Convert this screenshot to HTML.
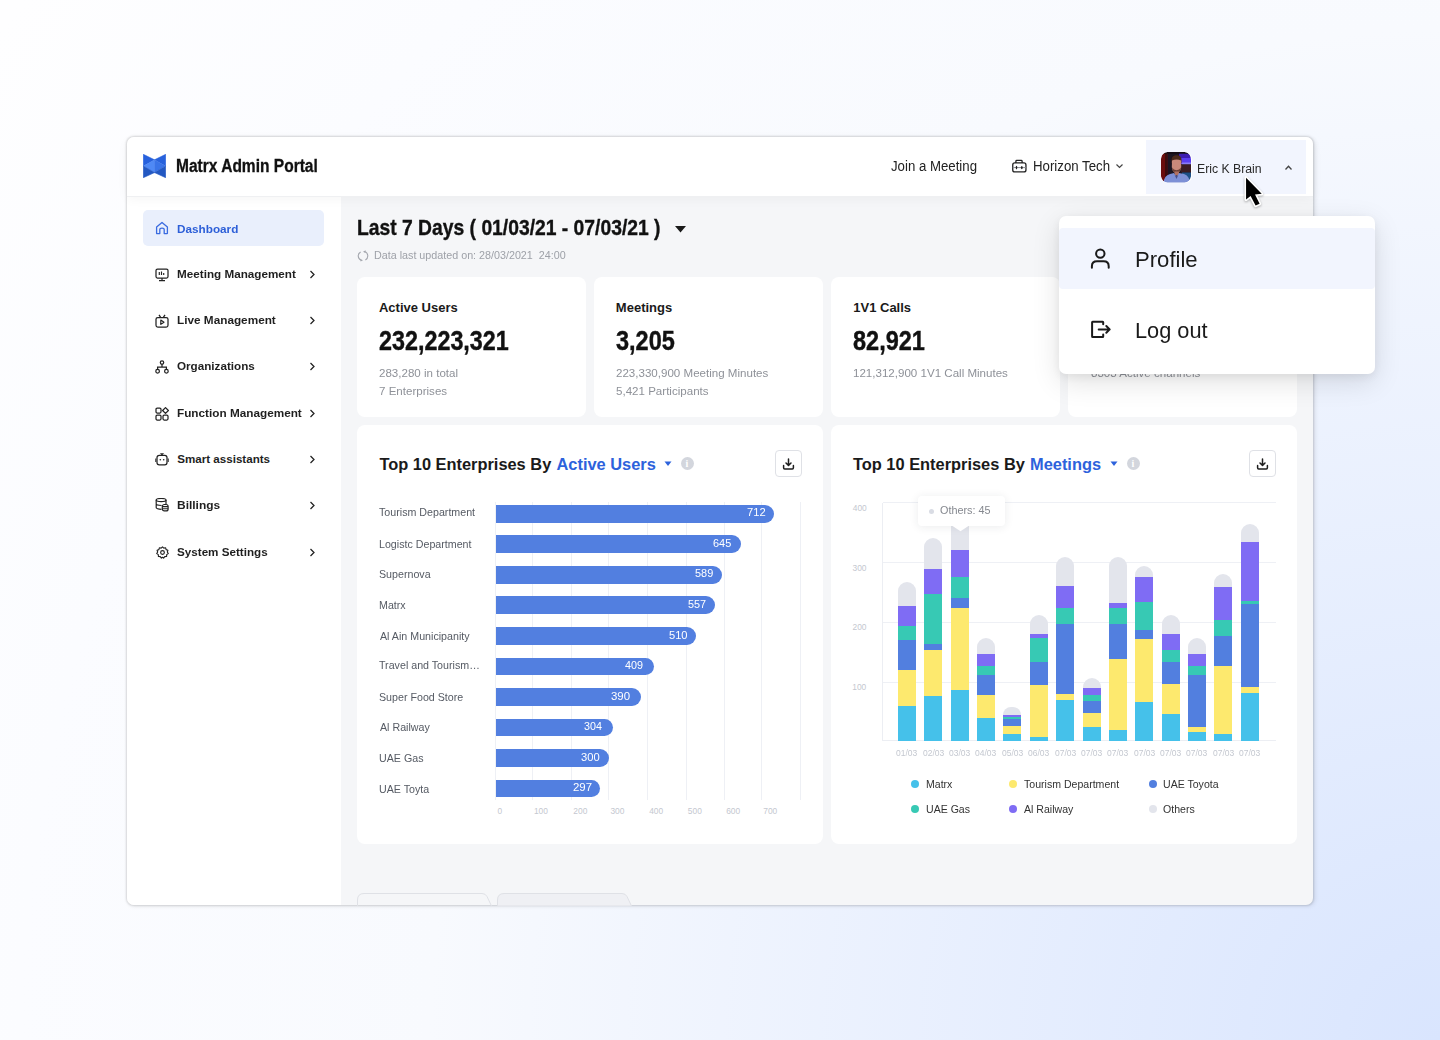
<!DOCTYPE html>
<html><head><meta charset="utf-8"><title>Matrx Admin Portal</title>
<style>
html,body{margin:0;padding:0}
body{width:1440px;height:1040px;position:relative;overflow:hidden;background:radial-gradient(circle at 100% 100%,#d9e5fe 0px,#f8fafe 1010px,#fbfcff 1420px,#fefeff 1760px);font-family:"Liberation Sans",sans-serif}
.t{position:absolute;white-space:nowrap;line-height:1;transform-origin:0 0}
</style></head><body>
<div style="position:absolute;left:127.00px;top:137.00px;width:1186.00px;height:768.00px;background:#f5f6f8;border-radius:7px;box-shadow:0 0 2px 0.6px rgba(0,0,0,0.12),1.5px 1px 5px rgba(0,0,0,0.09);overflow:hidden"></div>
<div style="position:absolute;left:127.00px;top:196.00px;width:214.00px;height:709.00px;background:#fff;border-bottom-left-radius:7px"></div>
<div style="position:absolute;left:127.00px;top:137.00px;width:1186.00px;height:59.00px;background:#fff;border-top-left-radius:7px;border-top-right-radius:7px;box-shadow:0 3px 12px rgba(0,0,0,0.045)"></div>
<div style="position:absolute;left:127.00px;top:196.00px;width:1186.00px;height:1.00px;background:#eff0f2"></div>
<svg style="position:absolute;left:143.00px;top:154.00px;" width="23" height="24" viewBox="0 0 23 24" fill="none">
<path d="M0.3 0.3 L11.5 5.8 L0.3 12 Z" fill="#2761dd" stroke="#2761dd" stroke-width="0.6" stroke-linejoin="round"/>
<path d="M22.7 0.3 L11.5 5.8 L22.7 12 Z" fill="#2862dc" stroke="#2862dc" stroke-width="0.6" stroke-linejoin="round"/>
<path d="M0.3 12 L11.9 5.6 L11.9 18.8 Z" fill="#4f89f5"/>
<path d="M22.7 12 L11.5 5.8 L11.5 18.6 Z" fill="#3a74e8"/>
<path d="M0.3 12 L11.5 18.6 L0.3 23.7 Z" fill="#2358c2" stroke="#2358c2" stroke-width="0.6" stroke-linejoin="round"/>
<path d="M22.7 12 L11.5 18.6 L22.7 23.7 Z" fill="#2358c2" stroke="#2358c2" stroke-width="0.6" stroke-linejoin="round"/>
</svg>
<div class="t" style="left:176.01px;top:158px;font-size:17.50px;font-weight:700;color:#111;transform:scaleX(0.8875);-webkit-text-stroke:0.3px #111;">Matrx Admin Portal</div>
<div class="t" style="left:891.46px;top:159px;font-size:14.00px;color:#222;transform:scaleX(0.9444);">Join a Meeting</div>
<svg style="position:absolute;left:1011.00px;top:159.00px;" width="16" height="14" viewBox="0 0 16 14" fill="none"><rect x="1.75" y="3.9" width="13.2" height="9" rx="2" stroke="#222" stroke-width="1.3"/><path d="M4.9 3.9 V2.2 Q4.9 1.4 5.8 1.4 H10.2 Q11.1 1.4 11.1 2.2 V3.9" stroke="#222" stroke-width="1.3"/><path d="M1.8 8.6 H14.9" stroke="#8a8d93" stroke-width="1"/><ellipse cx="5.5" cy="8.6" rx="0.75" ry="1.8" fill="#222"/><ellipse cx="10.8" cy="8.6" rx="0.9" ry="1.7" fill="#222"/></svg>
<div class="t" style="left:1033.05px;top:159px;font-size:14.00px;color:#222;transform:scaleX(0.9467);">Horizon Tech</div>
<svg style="position:absolute;left:1115.00px;top:163.00px;" width="9" height="6" viewBox="0 0 9 6" fill="none"><path d="M1.5 1.5 L4.5 4.5 L7.5 1.5" stroke="#444" stroke-width="1.2"/></svg>
<div style="position:absolute;left:1146.00px;top:140.00px;width:160.00px;height:54.00px;background:#f2f5fe"></div>
<div style="position:absolute;left:1160.5px;top:151.5px;width:31px;height:31.5px;border-radius:7px;background:#fff"></div>
<svg style="position:absolute;left:1161px;top:152px;border-radius:6.5px" width="30" height="30.5" viewBox="0 0 30 30.5">
<defs><filter id="av" x="-10%" y="-10%" width="120%" height="120%"><feGaussianBlur stdDeviation="0.55"/></filter>
<clipPath id="avc"><rect x="0" y="0" width="30" height="30.5" rx="6.5"/></clipPath></defs>
<g clip-path="url(#avc)"><g filter="url(#av)">
<rect x="-2" y="-2" width="34" height="35" fill="#1a1420"/>
<rect x="-2" y="-2" width="8.5" height="35" fill="#6a070c"/>
<rect x="4" y="-2" width="2.5" height="35" fill="#3a0a10"/>
<rect x="18" y="1.5" width="14" height="10.5" fill="#3b1fb0"/>
<rect x="20" y="6" width="12" height="6" fill="#5a3cf0"/>
<rect x="21" y="10.5" width="11" height="2" fill="#8a7cf5"/>
<rect x="20" y="12.5" width="12" height="8" fill="#3a1e22"/>
<rect x="21" y="20.5" width="11" height="8" fill="#1d4f86"/>
<rect x="-2" y="-2" width="34" height="3.5" fill="#120c12"/>
<path d="M10.5 8 Q10.5 3.5 15.5 3.3 Q20.5 3.5 20.5 8 L20.5 11 L10.5 11 Z" fill="#4d2a1e"/>
<path d="M11 8.5 Q15.5 6.5 20.2 8.5 L20.2 15 Q20 20.5 15.5 21 Q11 20.5 10.8 15 Z" fill="#c9897a"/>
<path d="M11 15.5 Q11.5 20.8 15.5 21.3 Q19.5 20.8 20 15.5 Q18.5 18 15.5 18.2 Q12.5 18 11 15.5 Z" fill="#6a3f34"/>
<rect x="13.5" y="19.5" width="4.5" height="4" fill="#b07060"/>
<path d="M2.5 31 Q3 23.5 9 22 L13 21 L15.5 25 L18 21 L23 22 Q28.5 24 29 31 Z" fill="#7d90d6"/>
<path d="M13 21.5 L15.5 27 L18 21.5 L16.8 24.5 L15.5 23 L14.2 24.5 Z" fill="#4a4f8a"/>
</g></g></svg>
<div class="t" style="left:1196.88px;top:163px;font-size:12.00px;color:#2a2a2a;transform:scaleX(1.0202);">Eric K Brain</div>
<svg style="position:absolute;left:1284.00px;top:164.00px;" width="9" height="7" viewBox="0 0 9 7" fill="none"><path d="M1.5 5.5 L4.5 2.2 L7.5 5.5" stroke="#444" stroke-width="1.3"/></svg>
<div style="position:absolute;left:143.00px;top:210.00px;width:181.00px;height:36.00px;background:#e9effc;border-radius:5px"></div>
<svg style="position:absolute;left:155.00px;top:221.00px;" width="14" height="14" viewBox="0 0 14 14" fill="none"><path d="M1.6 6 L7 1.4 L12.4 6 V12.2 Q12.4 12.6 12 12.6 H9.2 V8.6 Q9.2 7.2 7 7.2 Q4.8 7.2 4.8 8.6 V12.6 H2 Q1.6 12.6 1.6 12.2 Z" stroke="#3a6be0" stroke-width="1.3" stroke-linejoin="round"/></svg>
<div class="t" style="left:176.74px;top:223px;font-size:11.60px;font-weight:700;color:#2d5fd8;transform:scaleX(1.0127);">Dashboard</div>
<svg style="position:absolute;left:155.00px;top:267.90px;" width="14" height="14" viewBox="0 0 14 14" fill="none"><rect x="1" y="1" width="12" height="9" rx="1.5" stroke="#222" stroke-width="1.25"/><path d="M7 10 V12.4 M4 12.6 H10" stroke="#222" stroke-width="1.25"/><path d="M4.3 4 V7 M6.5 3.5 V7 M8.7 5 V7" stroke="#222" stroke-width="1.15"/></svg>
<div class="t" style="left:176.74px;top:268px;font-size:11.60px;font-weight:700;color:#1f1f1f;transform:scaleX(1.0085);">Meeting Management</div>
<svg style="position:absolute;left:309.00px;top:270.00px;" width="7" height="9" viewBox="0 0 7 9" fill="none"><path d="M1.5 1 L5 4.5 L1.5 8" stroke="#222" stroke-width="1.25"/></svg>
<svg style="position:absolute;left:155.00px;top:314.17px;" width="14" height="14" viewBox="0 0 14 14" fill="none"><rect x="1" y="3.5" width="12" height="9.5" rx="1.8" stroke="#222" stroke-width="1.25"/><path d="M4 0.8 L5.5 3.2 M10 0.8 L8.5 3.2" stroke="#222" stroke-width="1.25"/><path d="M5.8 6 L9 8.2 L5.8 10.4 Z" stroke="#222" stroke-width="1.15" stroke-linejoin="round"/></svg>
<div class="t" style="left:176.74px;top:314px;font-size:11.60px;font-weight:700;color:#1f1f1f;transform:scaleX(1.0155);">Live Management</div>
<svg style="position:absolute;left:309.00px;top:316.00px;" width="7" height="9" viewBox="0 0 7 9" fill="none"><path d="M1.5 1 L5 4.5 L1.5 8" stroke="#222" stroke-width="1.25"/></svg>
<svg style="position:absolute;left:155.00px;top:360.44px;" width="14" height="14" viewBox="0 0 14 14" fill="none"><circle cx="7" cy="2.6" r="1.7" stroke="#222" stroke-width="1.25"/><circle cx="2.6" cy="11.2" r="1.8" stroke="#222" stroke-width="1.25"/><circle cx="11.4" cy="11.2" r="1.8" stroke="#222" stroke-width="1.25"/><path d="M7 4.3 V7 M2.6 9.4 V7 H11.4 V9.4" stroke="#222" stroke-width="1.25"/></svg>
<div class="t" style="left:177.00px;top:360px;font-size:11.60px;font-weight:700;color:#1f1f1f;transform:scaleX(1.0065);">Organizations</div>
<svg style="position:absolute;left:309.00px;top:362.00px;" width="7" height="9" viewBox="0 0 7 9" fill="none"><path d="M1.5 1 L5 4.5 L1.5 8" stroke="#222" stroke-width="1.25"/></svg>
<svg style="position:absolute;left:155.00px;top:406.71px;" width="14" height="14" viewBox="0 0 14 14" fill="none"><rect x="1" y="1" width="5" height="5" rx="1.2" stroke="#222" stroke-width="1.25"/><rect x="1" y="8" width="5" height="5" rx="1.2" stroke="#222" stroke-width="1.25"/><rect x="8" y="8" width="5" height="5" rx="1.2" stroke="#222" stroke-width="1.25"/><path d="M10.5 0.6 L13.4 3.5 L10.5 6.4 L7.6 3.5 Z" stroke="#222" stroke-width="1.25" stroke-linejoin="round"/></svg>
<div class="t" style="left:176.74px;top:407px;font-size:11.60px;font-weight:700;color:#1f1f1f;transform:scaleX(1.0143);">Function Management</div>
<svg style="position:absolute;left:309.00px;top:409.00px;" width="7" height="9" viewBox="0 0 7 9" fill="none"><path d="M1.5 1 L5 4.5 L1.5 8" stroke="#222" stroke-width="1.25"/></svg>
<svg style="position:absolute;left:155.00px;top:452.98px;" width="14" height="14" viewBox="0 0 14 14" fill="none"><rect x="2" y="2.3" width="10" height="9.6" rx="2.3" stroke="#222" stroke-width="1.25"/><path d="M4.9 0.2 H9.1 L7 2.6 Z" fill="#222"/><path d="M0.8 5.4 V8.9 M13.2 5.4 V8.9" stroke="#444" stroke-width="1.3"/><circle cx="5.3" cy="6.7" r="0.8" fill="#222"/><circle cx="8.7" cy="6.7" r="0.8" fill="#222"/></svg>
<div class="t" style="left:177.25px;top:453px;font-size:11.60px;font-weight:700;color:#1f1f1f;">Smart assistants</div>
<svg style="position:absolute;left:309.00px;top:455.00px;" width="7" height="9" viewBox="0 0 7 9" fill="none"><path d="M1.5 1 L5 4.5 L1.5 8" stroke="#222" stroke-width="1.25"/></svg>
<svg style="position:absolute;left:155.00px;top:498.25px;" width="14" height="14" viewBox="0 0 14 14" fill="none"><ellipse cx="6.1" cy="2.1" rx="4.9" ry="1.6" stroke="#222" stroke-width="1.2"/><path d="M1.2 2.1 V9.6 Q1.2 11.1 6.5 11.3 M11 2.1 V6 M1.2 5.8 Q1.2 7.4 6.6 7.5" stroke="#222" stroke-width="1.2"/><rect x="7.3" y="6.5" width="5.8" height="6.4" rx="2" fill="#fff" stroke="#222" stroke-width="1.2"/><path d="M7.3 8.6 H13.1 M7.3 10.8 H13.1" stroke="#222" stroke-width="1.1"/></svg>
<div class="t" style="left:176.73px;top:499px;font-size:11.60px;font-weight:700;color:#1f1f1f;transform:scaleX(1.0307);">Billings</div>
<svg style="position:absolute;left:309.00px;top:501.00px;" width="7" height="9" viewBox="0 0 7 9" fill="none"><path d="M1.5 1 L5 4.5 L1.5 8" stroke="#222" stroke-width="1.25"/></svg>
<svg style="position:absolute;left:155.50px;top:545.92px;" width="13" height="13" viewBox="0 0 14 14" fill="none"><path d="M7 0.9 L8.4 2.3 L10.4 1.9 L10.9 3.9 L12.8 4.6 L12.2 6.5 L13.2 8.2 L11.5 9.3 L11.4 11.3 L9.4 11.4 L8.2 13.1 L7 12.1 L5.8 13.1 L4.6 11.4 L2.6 11.3 L2.5 9.3 L0.8 8.2 L1.8 6.5 L1.2 4.6 L3.1 3.9 L3.6 1.9 L5.6 2.3 Z" stroke="#222" stroke-width="1.2" stroke-linejoin="round"/><circle cx="7" cy="7" r="2" stroke="#222" stroke-width="1.25"/></svg>
<div class="t" style="left:177.25px;top:546px;font-size:11.60px;font-weight:700;color:#1f1f1f;transform:scaleX(1.0056);">System Settings</div>
<svg style="position:absolute;left:309.00px;top:548.00px;" width="7" height="9" viewBox="0 0 7 9" fill="none"><path d="M1.5 1 L5 4.5 L1.5 8" stroke="#222" stroke-width="1.25"/></svg>
<div class="t" style="left:357.38px;top:218px;font-size:21.50px;font-weight:700;color:#111;transform:scaleX(0.8973);-webkit-text-stroke:0.35px #111;">Last 7 Days ( 01/03/21 - 07/03/21 )</div>
<svg style="position:absolute;left:674.00px;top:225.00px;" width="13" height="8" viewBox="0 0 13 8" fill="none"><path d="M1 1 H12 L6.5 7.4 Z" fill="#1a1a1a"/></svg>
<svg style="position:absolute;left:357.00px;top:249.50px;" width="12" height="12" viewBox="0 0 12 12" fill="none"><path d="M3.6 1.9 A4.67 4.67 0 0 0 4.2 10.3" stroke="#a3a6ad" stroke-width="1.1"/><path d="M8.4 10 A4.67 4.67 0 0 0 7.6 1.5" stroke="#a3a6ad" stroke-width="1.1"/><path d="M3.4 8.9 L6 10.2 L3.6 11.6 Z" fill="#a3a6ad"/><path d="M8.6 0.3 L6 1.7 L8.4 3.1 Z" fill="#a3a6ad"/></svg>
<div class="t" style="left:374.27px;top:250px;font-size:11.00px;color:#9ea1a8;transform:scaleX(0.9762);white-space:pre;">Data last updated on: 28/03/2021  24:00</div>
<div style="position:absolute;left:357.00px;top:277.00px;width:229.00px;height:140.00px;background:#fff;border-radius:8px"></div>
<div class="t" style="left:378.95px;top:301px;font-size:13.00px;font-weight:700;color:#1a1a1a;">Active Users</div>
<div class="t" style="left:378.55px;top:328px;font-size:27.00px;font-weight:700;color:#111;transform:scaleX(0.8645);-webkit-text-stroke:0.4px #111;">232,223,321</div>
<div class="t" style="left:378.69px;top:368px;font-size:11.40px;color:#8e9198;transform:scaleX(1.0150);">283,280 in total</div>
<div class="t" style="left:378.69px;top:386px;font-size:11.40px;color:#8e9198;transform:scaleX(1.0150);">7 Enterprises</div>
<div style="position:absolute;left:594.00px;top:277.00px;width:229.00px;height:140.00px;background:#fff;border-radius:8px"></div>
<div class="t" style="left:615.85px;top:301px;font-size:13.00px;font-weight:700;color:#1a1a1a;">Meetings</div>
<div class="t" style="left:616.16px;top:328px;font-size:27.00px;font-weight:700;color:#111;transform:scaleX(0.8701);-webkit-text-stroke:0.4px #111;">3,205</div>
<div class="t" style="left:616.09px;top:368px;font-size:11.40px;color:#8e9198;transform:scaleX(1.0150);">223,330,900 Meeting Minutes</div>
<div class="t" style="left:616.09px;top:386px;font-size:11.40px;color:#8e9198;transform:scaleX(1.0150);">5,421 Participants</div>
<div style="position:absolute;left:831.00px;top:277.00px;width:229.00px;height:140.00px;background:#fff;border-radius:8px"></div>
<div class="t" style="left:853.25px;top:301px;font-size:13.00px;font-weight:700;color:#1a1a1a;">1V1 Calls</div>
<div class="t" style="left:853.35px;top:328px;font-size:27.00px;font-weight:700;color:#111;transform:scaleX(0.8707);-webkit-text-stroke:0.4px #111;">82,921</div>
<div class="t" style="left:853.24px;top:368px;font-size:11.40px;color:#8e9198;transform:scaleX(1.0150);">121,312,900 1V1 Call Minutes</div>
<div style="position:absolute;left:1068.00px;top:277.00px;width:229.00px;height:140.00px;background:#fff;border-radius:8px"></div>
<div class="t" style="left:1090.65px;top:301px;font-size:13.00px;font-weight:700;color:#1a1a1a;">Live Channels</div>
<div class="t" style="left:1089.84px;top:328px;font-size:27.00px;font-weight:700;color:#111;transform:scaleX(0.8901);-webkit-text-stroke:0.4px #111;">1,203</div>
<div class="t" style="left:1090.89px;top:368px;font-size:11.40px;color:#8e9198;transform:scaleX(1.0150);">8303 Active channels</div>
<div style="position:absolute;left:357.00px;top:425.00px;width:466.00px;height:419.00px;background:#fff;border-radius:8px"></div>
<div style="position:absolute;left:775.00px;top:450.00px;width:27.00px;height:27.00px;background:#fff;border:1px solid #dfe1e6;border-radius:4px;box-sizing:border-box"></div>
<svg style="position:absolute;left:782.00px;top:457.00px;" width="13" height="13" viewBox="0 0 13 13" fill="none"><path d="M6.5 2 V8.3 M4 6 L6.5 8.4 L9 6" stroke="#1e1e1e" stroke-width="1.5" stroke-linecap="round" stroke-linejoin="round"/><path d="M1.6 8.4 V10.8 Q1.6 11.9 2.7 11.9 H10.3 Q11.4 11.9 11.4 10.8 V8.4" stroke="#1e1e1e" stroke-width="1.5" stroke-linecap="round"/></svg>
<div style="position:absolute;left:831.00px;top:425.00px;width:466.00px;height:419.00px;background:#fff;border-radius:8px"></div>
<div style="position:absolute;left:1249.00px;top:450.00px;width:27.00px;height:27.00px;background:#fff;border:1px solid #dfe1e6;border-radius:4px;box-sizing:border-box"></div>
<svg style="position:absolute;left:1256.00px;top:457.00px;" width="13" height="13" viewBox="0 0 13 13" fill="none"><path d="M6.5 2 V8.3 M4 6 L6.5 8.4 L9 6" stroke="#1e1e1e" stroke-width="1.5" stroke-linecap="round" stroke-linejoin="round"/><path d="M1.6 8.4 V10.8 Q1.6 11.9 2.7 11.9 H10.3 Q11.4 11.9 11.4 10.8 V8.4" stroke="#1e1e1e" stroke-width="1.5" stroke-linecap="round"/></svg>
<div class="t" style="left:379.40px;top:456px;font-size:16.40px;font-weight:700;color:#1a1a1a;">Top 10 Enterprises By</div>
<div class="t" style="left:556.50px;top:456px;font-size:16.40px;font-weight:700;color:#2d62dc;">Active Users</div>
<svg style="position:absolute;left:664.00px;top:461.00px;" width="8" height="6" viewBox="0 0 8 6" fill="none"><path d="M0.5 0.5 H7.5 L4 5 Z" fill="#2d62dc"/></svg>
<div style="position:absolute;left:680.5px;top:457px;width:13px;height:13px;border-radius:50%;background:#d3d6dd"></div>
<div style="position:absolute;left:680.5px;top:457px;width:13px;height:13px;font:bold 10px/13px 'Liberation Serif',serif;color:#fff;text-align:center">i</div>
<div class="t" style="left:853.00px;top:456px;font-size:16.40px;font-weight:700;color:#1a1a1a;">Top 10 Enterprises By</div>
<div class="t" style="left:1030.00px;top:456px;font-size:16.40px;font-weight:700;color:#2d62dc;">Meetings</div>
<svg style="position:absolute;left:1110.00px;top:461.00px;" width="8" height="6" viewBox="0 0 8 6" fill="none"><path d="M0.5 0.5 H7.5 L4 5 Z" fill="#2d62dc"/></svg>
<div style="position:absolute;left:1126.5px;top:457px;width:13px;height:13px;border-radius:50%;background:#d3d6dd"></div>
<div style="position:absolute;left:1126.5px;top:457px;width:13px;height:13px;font:bold 10px/13px 'Liberation Serif',serif;color:#fff;text-align:center">i</div>
<div style="position:absolute;left:495.30px;top:502.00px;width:1.00px;height:297.50px;background:#eef0f5"></div>
<div style="position:absolute;left:531.90px;top:502.00px;width:1.00px;height:297.50px;background:#eef0f5"></div>
<div style="position:absolute;left:571.10px;top:502.00px;width:1.00px;height:297.50px;background:#eef0f5"></div>
<div style="position:absolute;left:608.20px;top:502.00px;width:1.00px;height:297.50px;background:#eef0f5"></div>
<div style="position:absolute;left:646.70px;top:502.00px;width:1.00px;height:297.50px;background:#eef0f5"></div>
<div style="position:absolute;left:685.60px;top:502.00px;width:1.00px;height:297.50px;background:#eef0f5"></div>
<div style="position:absolute;left:723.90px;top:502.00px;width:1.00px;height:297.50px;background:#eef0f5"></div>
<div style="position:absolute;left:761.00px;top:502.00px;width:1.00px;height:297.50px;background:#eef0f5"></div>
<div style="position:absolute;left:800.20px;top:502.00px;width:1.00px;height:297.50px;background:#eef0f5"></div>
<div style="position:absolute;left:495.60px;top:504.80px;width:278.10px;height:17.80px;background:#527fe0;border-radius:0 9px 9px 0"></div>
<div class="t" style="left:379.26px;top:507px;font-size:11.00px;color:#555a63;transform:scaleX(0.9700);">Tourism Department</div>
<div class="t" style="left:747.19px;top:507px;font-size:11.00px;color:#fff;transform:scaleX(1.0171);">712</div>
<div style="position:absolute;left:495.60px;top:535.34px;width:245.10px;height:17.80px;background:#527fe0;border-radius:0 9px 9px 0"></div>
<div class="t" style="left:378.77px;top:539px;font-size:11.00px;color:#555a63;transform:scaleX(0.9700);">Logistc Department</div>
<div class="t" style="left:713.30px;top:538px;font-size:11.00px;color:#fff;transform:scaleX(0.9943);">645</div>
<div style="position:absolute;left:495.60px;top:565.88px;width:226.40px;height:17.80px;background:#527fe0;border-radius:0 9px 9px 0"></div>
<div class="t" style="left:379.01px;top:569px;font-size:11.00px;color:#555a63;transform:scaleX(0.9700);">Supernova</div>
<div class="t" style="left:695.10px;top:568px;font-size:11.00px;color:#fff;transform:scaleX(0.9943);">589</div>
<div style="position:absolute;left:495.60px;top:596.42px;width:219.00px;height:17.80px;background:#527fe0;border-radius:0 9px 9px 0"></div>
<div class="t" style="left:378.77px;top:600px;font-size:11.00px;color:#555a63;transform:scaleX(0.9700);">Matrx</div>
<div class="t" style="left:687.71px;top:599px;font-size:11.00px;color:#fff;transform:scaleX(0.9886);">557</div>
<div style="position:absolute;left:495.60px;top:626.96px;width:200.80px;height:17.80px;background:#527fe0;border-radius:0 9px 9px 0"></div>
<div class="t" style="left:379.50px;top:631px;font-size:11.00px;color:#555a63;transform:scaleX(0.9700);">Al Ain Municipanity</div>
<div class="t" style="left:669.09px;top:630px;font-size:11.00px;color:#fff;transform:scaleX(1.0114);">510</div>
<div style="position:absolute;left:495.60px;top:657.50px;width:158.40px;height:17.80px;background:#527fe0;border-radius:0 9px 9px 0"></div>
<div class="t" style="left:379.26px;top:660px;font-size:11.00px;color:#555a63;transform:scaleX(0.9700);">Travel and Tourism…</div>
<div class="t" style="left:624.65px;top:660px;font-size:11.00px;color:#fff;transform:scaleX(0.9803);">409</div>
<div style="position:absolute;left:495.60px;top:688.04px;width:145.40px;height:17.80px;background:#527fe0;border-radius:0 9px 9px 0"></div>
<div class="t" style="left:379.01px;top:692px;font-size:11.00px;color:#555a63;transform:scaleX(0.9700);">Super Food Store</div>
<div class="t" style="left:611.18px;top:691px;font-size:11.00px;color:#fff;transform:scaleX(1.0400);">390</div>
<div style="position:absolute;left:495.60px;top:718.58px;width:117.10px;height:17.80px;background:#527fe0;border-radius:0 9px 9px 0"></div>
<div class="t" style="left:379.50px;top:722px;font-size:11.00px;color:#555a63;transform:scaleX(0.9700);">Al Railway</div>
<div class="t" style="left:583.51px;top:721px;font-size:11.00px;color:#fff;transform:scaleX(0.9746);">304</div>
<div style="position:absolute;left:495.60px;top:749.12px;width:113.80px;height:17.80px;background:#527fe0;border-radius:0 9px 9px 0"></div>
<div class="t" style="left:378.77px;top:753px;font-size:11.00px;color:#555a63;transform:scaleX(0.9700);">UAE Gas</div>
<div class="t" style="left:580.99px;top:752px;font-size:11.00px;color:#fff;transform:scaleX(1.0171);">300</div>
<div style="position:absolute;left:495.60px;top:779.66px;width:104.10px;height:17.80px;background:#527fe0;border-radius:0 9px 9px 0"></div>
<div class="t" style="left:378.77px;top:784px;font-size:11.00px;color:#555a63;transform:scaleX(0.9700);">UAE Toyta</div>
<div class="t" style="left:573.08px;top:782px;font-size:11.00px;color:#fff;transform:scaleX(1.0400);">297</div>
<div class="t" style="left:497.55px;top:807px;font-size:8.40px;color:#c4c8d0;">0</div>
<div class="t" style="left:533.90px;top:807px;font-size:8.40px;color:#c4c8d0;">100</div>
<div class="t" style="left:573.35px;top:807px;font-size:8.40px;color:#c4c8d0;">200</div>
<div class="t" style="left:610.45px;top:807px;font-size:8.40px;color:#c4c8d0;">300</div>
<div class="t" style="left:649.20px;top:807px;font-size:8.40px;color:#c4c8d0;">400</div>
<div class="t" style="left:687.85px;top:807px;font-size:8.40px;color:#c4c8d0;">500</div>
<div class="t" style="left:726.15px;top:807px;font-size:8.40px;color:#c4c8d0;">600</div>
<div class="t" style="left:763.25px;top:807px;font-size:8.40px;color:#c4c8d0;">700</div>
<div style="position:absolute;left:882.50px;top:502.10px;width:393.00px;height:1.00px;background:#eef0f5"></div>
<div style="position:absolute;left:882.50px;top:561.90px;width:393.00px;height:1.00px;background:#eef0f5"></div>
<div style="position:absolute;left:882.50px;top:621.90px;width:393.00px;height:1.00px;background:#eef0f5"></div>
<div style="position:absolute;left:882.50px;top:681.60px;width:393.00px;height:1.00px;background:#eef0f5"></div>
<div style="position:absolute;left:882.50px;top:740.30px;width:393.00px;height:1.00px;background:#eceef3"></div>
<div style="position:absolute;left:882.20px;top:502.60px;width:1.00px;height:238.20px;background:#eceef3"></div>
<div class="t" style="left:852.80px;top:504px;font-size:8.40px;color:#c4c8d0;">400</div>
<div class="t" style="left:852.55px;top:564px;font-size:8.40px;color:#c4c8d0;">300</div>
<div class="t" style="left:852.55px;top:623px;font-size:8.40px;color:#c4c8d0;">200</div>
<div class="t" style="left:852.30px;top:683px;font-size:8.40px;color:#c4c8d0;">100</div>
<div style="position:absolute;left:898.00px;top:581.70px;width:18px;height:159.10px"><div style="position:absolute;left:0;top:0.00px;width:18px;height:24.30px;background:#e3e5ec;border-radius:9px 9px 0 0;"></div><div style="position:absolute;left:0;top:24.30px;width:18px;height:20.00px;background:#7f6cf4;"></div><div style="position:absolute;left:0;top:44.30px;width:18px;height:14.20px;background:#37c9b4;"></div><div style="position:absolute;left:0;top:58.50px;width:18px;height:29.40px;background:#527fdf;"></div><div style="position:absolute;left:0;top:87.90px;width:18px;height:36.50px;background:#fde96e;"></div><div style="position:absolute;left:0;top:124.40px;width:18px;height:34.70px;background:#45c1ea;"></div></div>
<div class="t" style="left:896.35px;top:749px;font-size:8.40px;color:#c4c8d0;transform:scaleX(1.0146);">01/03</div>
<div style="position:absolute;left:924.37px;top:537.70px;width:18px;height:203.10px"><div style="position:absolute;left:0;top:0.00px;width:18px;height:31.30px;background:#e3e5ec;border-radius:9px 9px 0 0;"></div><div style="position:absolute;left:0;top:31.30px;width:18px;height:25.20px;background:#7f6cf4;"></div><div style="position:absolute;left:0;top:56.50px;width:18px;height:50.00px;background:#37c9b4;"></div><div style="position:absolute;left:0;top:106.50px;width:18px;height:5.80px;background:#527fdf;"></div><div style="position:absolute;left:0;top:112.30px;width:18px;height:46.00px;background:#fde96e;"></div><div style="position:absolute;left:0;top:158.30px;width:18px;height:44.80px;background:#45c1ea;"></div></div>
<div class="t" style="left:922.72px;top:749px;font-size:8.40px;color:#c4c8d0;transform:scaleX(1.0146);">02/03</div>
<div style="position:absolute;left:950.74px;top:523.00px;width:18px;height:217.80px"><div style="position:absolute;left:0;top:0.00px;width:18px;height:27.00px;background:#e3e5ec;"></div><div style="position:absolute;left:0;top:27.00px;width:18px;height:27.30px;background:#7f6cf4;"></div><div style="position:absolute;left:0;top:54.30px;width:18px;height:20.50px;background:#37c9b4;"></div><div style="position:absolute;left:0;top:74.80px;width:18px;height:10.10px;background:#527fdf;"></div><div style="position:absolute;left:0;top:84.90px;width:18px;height:82.40px;background:#fde96e;"></div><div style="position:absolute;left:0;top:167.30px;width:18px;height:50.50px;background:#45c1ea;"></div></div>
<div class="t" style="left:949.09px;top:749px;font-size:8.40px;color:#c4c8d0;transform:scaleX(1.0146);">03/03</div>
<div style="position:absolute;left:977.11px;top:637.80px;width:18px;height:103.00px"><div style="position:absolute;left:0;top:0.00px;width:18px;height:16.00px;background:#e3e5ec;border-radius:9px 9px 0 0;"></div><div style="position:absolute;left:0;top:16.00px;width:18px;height:12.70px;background:#7f6cf4;"></div><div style="position:absolute;left:0;top:28.70px;width:18px;height:9.00px;background:#37c9b4;"></div><div style="position:absolute;left:0;top:37.70px;width:18px;height:19.50px;background:#527fdf;"></div><div style="position:absolute;left:0;top:57.20px;width:18px;height:23.40px;background:#fde96e;"></div><div style="position:absolute;left:0;top:80.60px;width:18px;height:22.40px;background:#45c1ea;"></div></div>
<div class="t" style="left:975.46px;top:749px;font-size:8.40px;color:#c4c8d0;transform:scaleX(1.0146);">04/03</div>
<div style="position:absolute;left:1003.48px;top:706.80px;width:18px;height:34.00px"><div style="position:absolute;left:0;top:0.00px;width:18px;height:8.70px;background:#e3e5ec;border-radius:9px 9px 0 0;"></div><div style="position:absolute;left:0;top:8.70px;width:18px;height:1.20px;background:#7f6cf4;"></div><div style="position:absolute;left:0;top:9.90px;width:18px;height:2.40px;background:#37c9b4;"></div><div style="position:absolute;left:0;top:12.30px;width:18px;height:6.60px;background:#527fdf;"></div><div style="position:absolute;left:0;top:18.90px;width:18px;height:8.20px;background:#fde96e;"></div><div style="position:absolute;left:0;top:27.10px;width:18px;height:6.90px;background:#45c1ea;"></div></div>
<div class="t" style="left:1001.83px;top:749px;font-size:8.40px;color:#c4c8d0;transform:scaleX(1.0146);">05/03</div>
<div style="position:absolute;left:1029.85px;top:614.70px;width:18px;height:126.10px"><div style="position:absolute;left:0;top:0.00px;width:18px;height:19.60px;background:#e3e5ec;border-radius:9px 9px 0 0;"></div><div style="position:absolute;left:0;top:19.60px;width:18px;height:3.50px;background:#7f6cf4;"></div><div style="position:absolute;left:0;top:23.10px;width:18px;height:23.80px;background:#37c9b4;"></div><div style="position:absolute;left:0;top:46.90px;width:18px;height:23.30px;background:#527fdf;"></div><div style="position:absolute;left:0;top:70.20px;width:18px;height:52.30px;background:#fde96e;"></div><div style="position:absolute;left:0;top:122.50px;width:18px;height:3.60px;background:#45c1ea;"></div></div>
<div class="t" style="left:1028.20px;top:749px;font-size:8.40px;color:#c4c8d0;transform:scaleX(1.0146);">06/03</div>
<div style="position:absolute;left:1056.22px;top:557.00px;width:18px;height:183.80px"><div style="position:absolute;left:0;top:0.00px;width:18px;height:29.00px;background:#e3e5ec;border-radius:9px 9px 0 0;"></div><div style="position:absolute;left:0;top:29.00px;width:18px;height:21.90px;background:#7f6cf4;"></div><div style="position:absolute;left:0;top:50.90px;width:18px;height:16.50px;background:#37c9b4;"></div><div style="position:absolute;left:0;top:67.40px;width:18px;height:69.20px;background:#527fdf;"></div><div style="position:absolute;left:0;top:136.60px;width:18px;height:6.60px;background:#fde96e;"></div><div style="position:absolute;left:0;top:143.20px;width:18px;height:40.60px;background:#45c1ea;"></div></div>
<div class="t" style="left:1054.57px;top:749px;font-size:8.40px;color:#c4c8d0;transform:scaleX(1.0146);">07/03</div>
<div style="position:absolute;left:1082.59px;top:678.30px;width:18px;height:62.50px"><div style="position:absolute;left:0;top:0.00px;width:18px;height:9.40px;background:#e3e5ec;border-radius:9px 9px 0 0;"></div><div style="position:absolute;left:0;top:9.40px;width:18px;height:7.30px;background:#7f6cf4;"></div><div style="position:absolute;left:0;top:16.70px;width:18px;height:6.00px;background:#37c9b4;"></div><div style="position:absolute;left:0;top:22.70px;width:18px;height:12.20px;background:#527fdf;"></div><div style="position:absolute;left:0;top:34.90px;width:18px;height:14.10px;background:#fde96e;"></div><div style="position:absolute;left:0;top:49.00px;width:18px;height:13.50px;background:#45c1ea;"></div></div>
<div class="t" style="left:1080.94px;top:749px;font-size:8.40px;color:#c4c8d0;transform:scaleX(1.0146);">07/03</div>
<div style="position:absolute;left:1108.96px;top:557.00px;width:18px;height:183.80px"><div style="position:absolute;left:0;top:0.00px;width:18px;height:46.00px;background:#e3e5ec;border-radius:9px 9px 0 0;"></div><div style="position:absolute;left:0;top:46.00px;width:18px;height:4.90px;background:#7f6cf4;"></div><div style="position:absolute;left:0;top:50.90px;width:18px;height:16.50px;background:#37c9b4;"></div><div style="position:absolute;left:0;top:67.40px;width:18px;height:34.60px;background:#527fdf;"></div><div style="position:absolute;left:0;top:102.00px;width:18px;height:70.70px;background:#fde96e;"></div><div style="position:absolute;left:0;top:172.70px;width:18px;height:11.10px;background:#45c1ea;"></div></div>
<div class="t" style="left:1107.31px;top:749px;font-size:8.40px;color:#c4c8d0;transform:scaleX(1.0146);">07/03</div>
<div style="position:absolute;left:1135.33px;top:566.00px;width:18px;height:174.80px"><div style="position:absolute;left:0;top:0.00px;width:18px;height:10.60px;background:#e3e5ec;border-radius:9px 9px 0 0;"></div><div style="position:absolute;left:0;top:10.60px;width:18px;height:25.40px;background:#7f6cf4;"></div><div style="position:absolute;left:0;top:36.00px;width:18px;height:28.00px;background:#37c9b4;"></div><div style="position:absolute;left:0;top:64.00px;width:18px;height:9.00px;background:#527fdf;"></div><div style="position:absolute;left:0;top:73.00px;width:18px;height:62.90px;background:#fde96e;"></div><div style="position:absolute;left:0;top:135.90px;width:18px;height:38.90px;background:#45c1ea;"></div></div>
<div class="t" style="left:1133.68px;top:749px;font-size:8.40px;color:#c4c8d0;transform:scaleX(1.0146);">07/03</div>
<div style="position:absolute;left:1161.70px;top:614.70px;width:18px;height:126.10px"><div style="position:absolute;left:0;top:0.00px;width:18px;height:19.60px;background:#e3e5ec;border-radius:9px 9px 0 0;"></div><div style="position:absolute;left:0;top:19.60px;width:18px;height:15.70px;background:#7f6cf4;"></div><div style="position:absolute;left:0;top:35.30px;width:18px;height:11.60px;background:#37c9b4;"></div><div style="position:absolute;left:0;top:46.90px;width:18px;height:22.90px;background:#527fdf;"></div><div style="position:absolute;left:0;top:69.80px;width:18px;height:29.20px;background:#fde96e;"></div><div style="position:absolute;left:0;top:99.00px;width:18px;height:27.10px;background:#45c1ea;"></div></div>
<div class="t" style="left:1160.05px;top:749px;font-size:8.40px;color:#c4c8d0;transform:scaleX(1.0146);">07/03</div>
<div style="position:absolute;left:1188.07px;top:637.80px;width:18px;height:103.00px"><div style="position:absolute;left:0;top:0.00px;width:18px;height:16.50px;background:#e3e5ec;border-radius:9px 9px 0 0;"></div><div style="position:absolute;left:0;top:16.50px;width:18px;height:12.20px;background:#7f6cf4;"></div><div style="position:absolute;left:0;top:28.70px;width:18px;height:9.00px;background:#37c9b4;"></div><div style="position:absolute;left:0;top:37.70px;width:18px;height:51.10px;background:#527fdf;"></div><div style="position:absolute;left:0;top:88.80px;width:18px;height:5.00px;background:#fde96e;"></div><div style="position:absolute;left:0;top:93.80px;width:18px;height:9.20px;background:#45c1ea;"></div></div>
<div class="t" style="left:1186.42px;top:749px;font-size:8.40px;color:#c4c8d0;transform:scaleX(1.0146);">07/03</div>
<div style="position:absolute;left:1214.44px;top:574.20px;width:18px;height:166.60px"><div style="position:absolute;left:0;top:0.00px;width:18px;height:13.00px;background:#e3e5ec;border-radius:9px 9px 0 0;"></div><div style="position:absolute;left:0;top:13.00px;width:18px;height:32.90px;background:#7f6cf4;"></div><div style="position:absolute;left:0;top:45.90px;width:18px;height:15.80px;background:#37c9b4;"></div><div style="position:absolute;left:0;top:61.70px;width:18px;height:30.60px;background:#527fdf;"></div><div style="position:absolute;left:0;top:92.30px;width:18px;height:67.40px;background:#fde96e;"></div><div style="position:absolute;left:0;top:159.70px;width:18px;height:6.90px;background:#45c1ea;"></div></div>
<div class="t" style="left:1212.79px;top:749px;font-size:8.40px;color:#c4c8d0;transform:scaleX(1.0146);">07/03</div>
<div style="position:absolute;left:1240.81px;top:524.00px;width:18px;height:216.80px"><div style="position:absolute;left:0;top:0.00px;width:18px;height:17.90px;background:#e3e5ec;border-radius:9px 9px 0 0;"></div><div style="position:absolute;left:0;top:17.90px;width:18px;height:59.40px;background:#7f6cf4;"></div><div style="position:absolute;left:0;top:77.30px;width:18px;height:2.40px;background:#37c9b4;"></div><div style="position:absolute;left:0;top:79.70px;width:18px;height:83.60px;background:#527fdf;"></div><div style="position:absolute;left:0;top:163.30px;width:18px;height:5.90px;background:#fde96e;"></div><div style="position:absolute;left:0;top:169.20px;width:18px;height:47.60px;background:#45c1ea;"></div></div>
<div class="t" style="left:1239.16px;top:749px;font-size:8.40px;color:#c4c8d0;transform:scaleX(1.0146);">07/03</div>
<div style="position:absolute;left:918px;top:496px;width:87px;height:29.5px;background:#fff;border-radius:4px;box-shadow:0 1px 10px rgba(30,40,60,0.09)"></div>
<svg style="position:absolute;left:950.50px;top:524.50px;" width="19" height="7" viewBox="0 0 19 7" fill="none"><path d="M0 0 H19 L9.5 6.2 Z" fill="#fff"/></svg>
<div style="position:absolute;left:929px;top:508.7px;width:5.2px;height:5.2px;border-radius:50%;background:#d9dce4"></div>
<div class="t" style="left:940.41px;top:505px;font-size:11.00px;color:#85888f;transform:scaleX(0.9842);">Others: 45</div>
<div style="position:absolute;left:911.30px;top:780.30px;width:8px;height:8px;border-radius:50%;background:#45c1ea"></div>
<div class="t" style="left:925.55px;top:779px;font-size:11.00px;color:#333;transform:scaleX(0.96);">Matrx</div>
<div style="position:absolute;left:1009.30px;top:780.30px;width:8px;height:8px;border-radius:50%;background:#fde96e"></div>
<div class="t" style="left:1024.05px;top:779px;font-size:11.00px;color:#333;transform:scaleX(0.96);">Tourism Department</div>
<div style="position:absolute;left:1148.60px;top:780.30px;width:8px;height:8px;border-radius:50%;background:#527fdf"></div>
<div class="t" style="left:1162.85px;top:779px;font-size:11.00px;color:#333;transform:scaleX(0.96);">UAE Toyota</div>
<div style="position:absolute;left:911.30px;top:804.80px;width:8px;height:8px;border-radius:50%;background:#37c9b4"></div>
<div class="t" style="left:925.55px;top:804px;font-size:11.00px;color:#333;transform:scaleX(0.96);">UAE Gas</div>
<div style="position:absolute;left:1009.30px;top:804.80px;width:8px;height:8px;border-radius:50%;background:#7f6cf4"></div>
<div class="t" style="left:1024.30px;top:804px;font-size:11.00px;color:#333;transform:scaleX(0.96);">Al Railway</div>
<div style="position:absolute;left:1148.60px;top:804.80px;width:8px;height:8px;border-radius:50%;background:#e3e5ec"></div>
<div class="t" style="left:1163.10px;top:804px;font-size:11.00px;color:#333;transform:scaleX(0.96);">Others</div>
<svg style="position:absolute;left:356px;top:892px" width="280" height="14" viewBox="0 0 280 14" fill="none"><path d="M1.5 14 V8 Q1.5 1.5 8 1.5 H126 Q129.5 1.5 131 4.5 L135.5 14" stroke="#dfe1e6" stroke-width="1"/><path d="M141.5 14 V8 Q141.5 1.5 148 1.5 H266 Q269.5 1.5 271 4.5 L275.5 14 Z" fill="#eff0f4" stroke="#dfe1e6" stroke-width="1"/></svg>
<div style="position:absolute;left:1059px;top:215.5px;width:316px;height:158px;background:#fff;border-radius:7px;box-shadow:0 8px 28px rgba(0,0,0,0.12),0 3px 8px rgba(0,0,0,0.06);overflow:hidden"><div style="position:absolute;left:0;top:12.5px;width:316px;height:61px;background:#f2f5fe;border-radius:4px"></div></div>
<svg style="position:absolute;left:1089.00px;top:247.00px;" width="23" height="23" viewBox="0 0 23 23" fill="none"><circle cx="11.3" cy="6.6" r="4.2" stroke="#1a1a1a" stroke-width="2"/><path d="M2.9 20.8 V19.2 Q2.9 14.3 8 14.3 H14.6 Q19.7 14.3 19.7 19.2 V20.8" stroke="#1a1a1a" stroke-width="2" stroke-linecap="round"/></svg>
<div class="t" style="left:1134.54px;top:249px;font-size:22.00px;color:#1a1a1a;transform:scaleX(1.0042);">Profile</div>
<svg style="position:absolute;left:1089.00px;top:319.00px;" width="24" height="21" viewBox="0 0 24 21" fill="none"><path d="M14.2 5.3 V3.3 Q14.2 2.8 13.7 2.8 H3.6 Q3.1 2.8 3.1 3.3 V17.5 Q3.1 18 3.6 18 H13.7 Q14.2 18 14.2 17.5 V15.5" stroke="#1a1a1a" stroke-width="2" stroke-linecap="round"/><path d="M9.7 10.4 H20.6 M17.3 7 L20.7 10.4 L17.3 13.8" stroke="#1a1a1a" stroke-width="2" stroke-linecap="round" stroke-linejoin="round"/></svg>
<div class="t" style="left:1134.57px;top:320px;font-size:22.00px;color:#1a1a1a;transform:scaleX(0.9888);">Log out</div>
<svg style="position:absolute;left:1238.00px;top:170.00px;filter:drop-shadow(0 1px 1.2px rgba(0,0,0,0.3));" width="30" height="44" viewBox="0 0 30 44" fill="none"><path d="M8.06 7.74 L8.06 29.6 L12.6 25.9 L17.6 35.6 L21.6 33.7 L17 24.4 L23.7 23.8 Z" fill="#000" stroke="#fff" stroke-width="3.2" stroke-linejoin="round" paint-order="stroke fill"/></svg>
</body></html>
